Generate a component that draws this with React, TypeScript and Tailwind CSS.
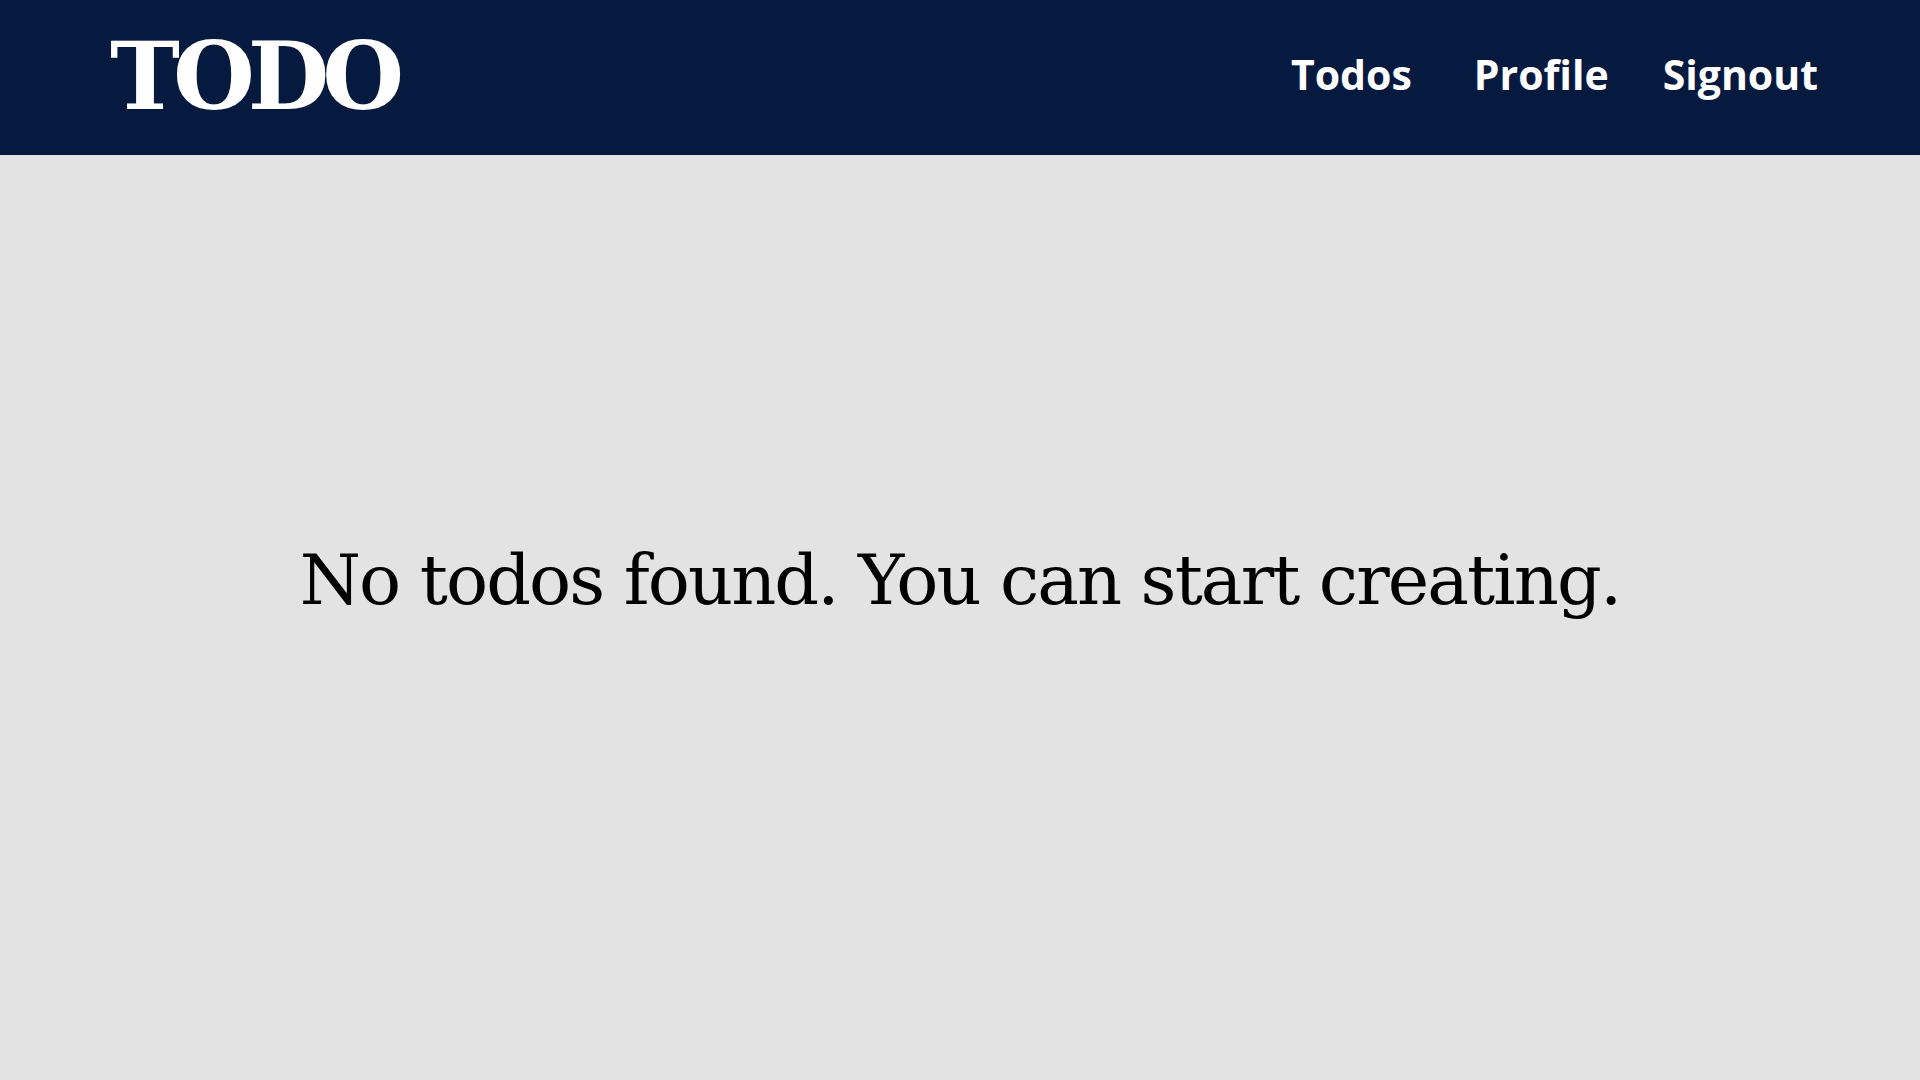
export default function App() {
  return (
    <div className="min-h-screen bg-[#e3e3e3] flex flex-col">
      <header className="h-[155px] bg-[#061a40] flex items-center justify-between pl-[110px] pr-[102px]">
        <h1 className="text-white text-[94px] font-bold leading-none tracking-[-7px] mt-[-4px] font-['DejaVu_Serif',serif]">
          TODO
        </h1>
        <nav className="flex items-center gap-[54px] mt-[-5px] text-white text-[41px] font-bold font-['Open_Sans',sans-serif]">
          <a href="#" className="mr-[8px]">Todos</a>
          <a href="#">Profile</a>
          <a href="#">Signout</a>
        </nav>
      </header>
      <main className="flex-1 flex justify-center pt-[390px]">
        <p className="text-black text-[70px] leading-none tracking-[-1.9px] font-['DejaVu_Serif',serif]">
          No todos found. You can start creating.
        </p>
      </main>
    </div>
  );
}
